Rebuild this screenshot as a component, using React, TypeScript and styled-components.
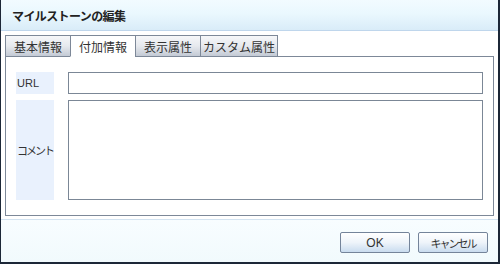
import React, { useState } from 'react';
import styled, { createGlobalStyle } from 'styled-components';

const GlobalStyle = createGlobalStyle`
  * { box-sizing: border-box; }
  body {
    margin: 0;
    font-family: "Noto Sans CJK JP", "Liberation Sans", sans-serif;
    color: #333;
  }
`;

const tabs = ['基本情報', '付加情報', '表示属性', 'カスタム属性'];

const App = () => {
  const [active, setActive] = useState(1);

  return (
    <>
      <GlobalStyle />
      <Window>
        <Header>
          <Title>マイルストーンの編集</Title>
        </Header>

        <Body>
          <TabRow>
            {tabs.map((t, i) => (
              <Tab
                key={t}
                $active={i === active}
                $w={i === 3 ? 78 : 66}
                onClick={() => setActive(i)}
              >
                {t}
              </Tab>
            ))}
          </TabRow>
          <Panel>
            <Row>
              <Label>URL</Label>
              <Input />
            </Row>
            <Row $grow>
              <Label $narrow>コメント</Label>
              <TextArea />
            </Row>
          </Panel>
        </Body>

        <Footer>
          <Button>OK</Button>
          <Button $narrow>キャンセル</Button>
        </Footer>
      </Window>
    </>
  );
};

export default App;

const Window = styled.div`
  width: 500px;
  height: 264px;
  display: flex;
  flex-direction: column;
  background: #fff;
  border-left: 1px solid #1c2737;
  border-right: 2px solid #1c2737;
  border-bottom: 2px solid #1c2737;
`;

const Header = styled.div`
  height: 31px;
  display: flex;
  align-items: center;
  padding-left: 11px;
  background: linear-gradient(#f2fbff 0%, #eaf8fe 45%, #d9ecf8 100%);
  border-bottom: 1px solid #bfd6ec;
`;

const Title = styled.div`
  font-size: 12px;
  font-weight: bold;
  letter-spacing: -0.6px;
  color: #222;
`;

const Body = styled.div`
  padding: 4px 4px 0 4px;
`;

const TabRow = styled.div`
  display: flex;
  height: 22px;
  position: relative;
  z-index: 1;
`;

const Tab = styled.div<{ $active?: boolean; $w: number }>`
  width: ${(p) => p.$w}px;
  height: 22px;
  margin-right: -1px;
  display: flex;
  align-items: center;
  justify-content: center;
  font-size: 12px;
  color: #333;
  border: 1px solid #7d8898;
  border-bottom-color: ${(p) => (p.$active ? '#fff' : '#7d8898')};
  background: ${(p) =>
    p.$active ? '#fff' : 'linear-gradient(#f6f7f9 0%, #e6e9ee 50%, #c3cad5 100%)'};
  cursor: pointer;
`;

const Panel = styled.div`
  margin-top: -1px;
  height: 160px;
  border: 1px solid #7d8898;
  padding: 15px 10px 15px 10px;
  display: flex;
  flex-direction: column;
  gap: 6px;
`;

const Row = styled.div<{ $grow?: boolean }>`
  display: flex;
  gap: 14px;
  height: ${(p) => (p.$grow ? 'auto' : '22px')};
  flex: ${(p) => (p.$grow ? 1 : 'none')};
`;

const Label = styled.div<{ $narrow?: boolean }>`
  width: 38px;
  flex: none;
  display: flex;
  align-items: center;
  padding-left: 1px;
  white-space: nowrap;
  overflow: hidden;
  font-family: "Liberation Sans", "Noto Sans CJK JP", sans-serif;
  font-size: 11px;
  letter-spacing: ${(p) => (p.$narrow ? '-2px' : '0')};
  color: #333;
  background: #e9f1fd;
`;

const Input = styled.input`
  flex: 1;
  height: 22px;
  border: 1px solid #7b8796;
  outline: none;
`;

const TextArea = styled.textarea`
  flex: 1;
  border: 1px solid #7b8796;
  outline: none;
  resize: none;
`;

const Footer = styled.div`
  margin-top: auto;
  height: 43px;
  display: flex;
  justify-content: flex-end;
  align-items: flex-start;
  gap: 8px;
  padding: 12px 10px 0 0;
  border-top: 1px solid #d3e3f1;
  background: linear-gradient(#f8fdff, #f1fafd);
`;

const Button = styled.button<{ $narrow?: boolean }>`
  width: 70px;
  height: 21px;
  padding: 0;
  font-family: "Liberation Sans", "Noto Sans CJK JP", sans-serif;
  font-size: ${(p) => (p.$narrow ? '11px' : '12px')};
  letter-spacing: ${(p) => (p.$narrow ? '-2px' : '0')};
  color: #333;
  border: 1px solid #74849a;
  border-radius: 2px;
  background: linear-gradient(#ffffff 0%, #eef4fa 50%, #c9dcef 100%);
`;
